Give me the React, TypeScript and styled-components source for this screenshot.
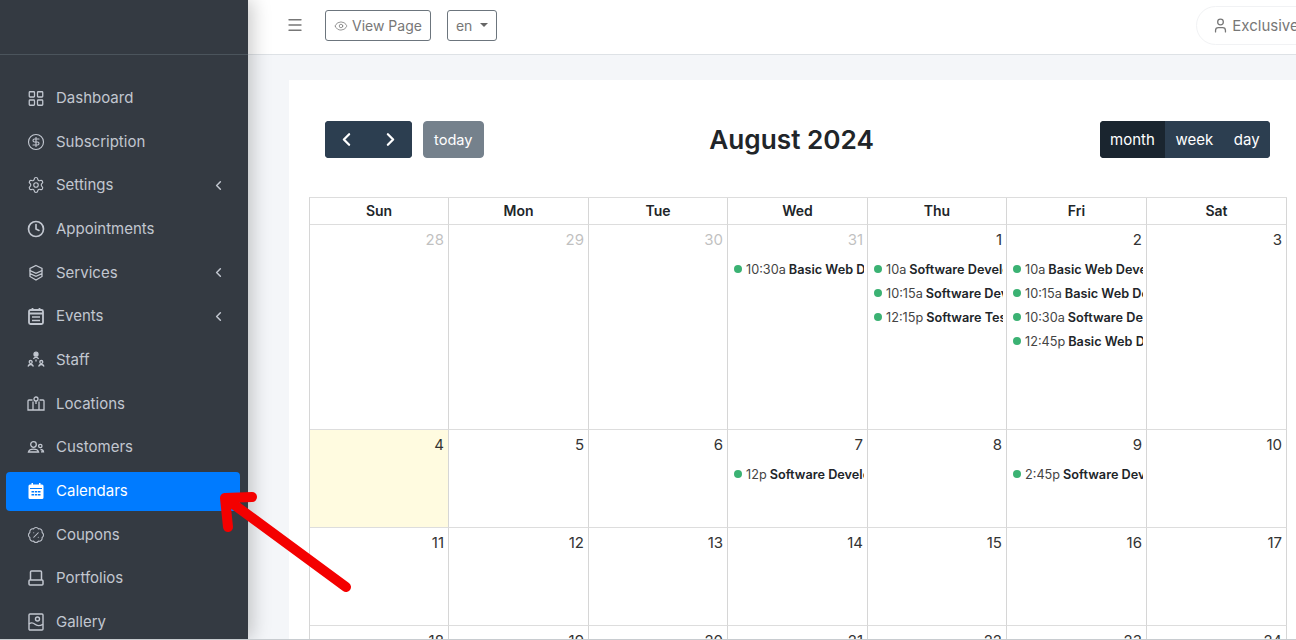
import styled, { createGlobalStyle } from "styled-components"
import {
  BadgePercent,
  ChevronLeft,
  ChevronRight,
  CircleDollarSign,
  Clock,
  Eye,
  LayoutGrid,
  Menu,
  Settings,
  User,
} from "lucide-react"
import type { ReactNode } from "react"

const GlobalStyle = createGlobalStyle`
  * { box-sizing: border-box; }
  html, body { margin: 0; padding: 0; height: 100%; overflow: hidden; }
  body { font-family: Inter, "Liberation Sans", sans-serif; background: #f4f6f9; }
`

const Glyph = ({ children, weight = 1.3 }: { children: ReactNode; weight?: number }) => (
  <svg width="18" height="18" viewBox="0 0 18 18" fill="none" stroke="currentColor" strokeWidth={weight}>
    {children}
  </svg>
)

const ServicesIcon = () => (
  <Glyph>
    <path d="M9 1.500l6 2.800v2.200l-6 2.800-6-2.800V4.300z" />
    <path d="M3 6.500v3l6 2.800 6-2.800v-3M3 9.500v3l6 3.500 6-3.500v-3" />
  </Glyph>
)

const StaffIcon = () => (
  <Glyph>
    <circle cx="9" cy="3.200" r="2" fill="currentColor" />
    <path d="M6.500 8c.4-1.200 1.300-1.600 2.500-1.600s2.100.4 2.500 1.600" />
    <circle cx="3.700" cy="11" r="1.500" />
    <circle cx="14.300" cy="11" r="1.500" />
    <path d="M1 15.500c.4-1.400 1.400-2 2.700-2s2.300.6 2.700 2M11.600 15.500c.4-1.400 1.400-2 2.700-2s2.300.6 2.700 2M9 8.500v2" />
  </Glyph>
)

const LocationsIcon = () => (
  <Glyph>
    <path d="M5.500 5H2a1 1 0 0 0-1 1v9h16V6a1 1 0 0 0-1-1h-3.500" />
    <path d="M6 6.500V15M12 6.500V15" />
    <circle cx="9" cy="4" r="2" />
    <path d="M9 6v3" />
  </Glyph>
)

const CustomersIcon = () => (
  <Glyph>
    <circle cx="6.500" cy="6.500" r="2.800" />
    <path d="M1.500 14c.6-2 2.500-2.800 5-2.800s4.400.8 5 2.800z" />
    <circle cx="13.300" cy="8" r="1.700" />
    <path d="M13.500 11.500c1.500 0 2.700.7 3 2.300h-2.500" />
  </Glyph>
)

const PortfoliosIcon = () => (
  <Glyph weight={1.5}>
    <path d="M3.500 11V3a1 1 0 0 1 1-1h9a1 1 0 0 1 1 1v8" />
    <rect x="2" y="11" width="14" height="5" rx="1" />
  </Glyph>
)

const GalleryIcon = () => (
  <Glyph weight={1.4}>
    <rect x="2" y="1" width="14" height="16" rx="1" />
    <circle cx="10.500" cy="6" r="2" />
    <path d="M2 11c2.500-2 4-1.500 6 .3s4 2 8 0" />
  </Glyph>
)

const CouponsIcon = () => <BadgePercent size={18} strokeWidth={1.4} />

const FilledCalendar = () => (
  <svg width="18" height="18" viewBox="0 0 18 18">
    <path
      fill="currentColor"
      d="M4.500 1h1.500v1.500h6V1h1.500v1.500H15a1.500 1.500 0 0 1 1.500 1.500v11.500A1.500 1.500 0 0 1 15 17H3a1.500 1.500 0 0 1-1.500-1.500V4A1.500 1.500 0 0 1 3 2.500h1.500z"
    />
    <path fill="#007bff" d="M3 6h12v1H3zM4.500 9h2.500v1.500H4.500zM7.800 9h2.500v1.500H7.800zM11 9h2.500v1.500H11zM4.500 12h2.500v1.500H4.500zM7.800 12h2.500v1.500H7.800zM11 12h2.500v1.500H11z" />
  </svg>
)

const EventsIcon = () => (
  <Glyph weight={1.8}>
    <rect x="2" y="3" width="14" height="14" rx="1.500" />
    <path d="M5.500 1v3M12.500 1v3M2 6.500h14" />
    <path strokeWidth="1.500" d="M5 10h8M5 13.500h8" />
  </Glyph>
)

type NavEntry = { label: string; icon: ReactNode; arrow?: boolean; active?: boolean }

const lucide = { size: 18, strokeWidth: 1.5 }

const navItems: NavEntry[] = [
  { label: "Dashboard", icon: <LayoutGrid size={19} strokeWidth={1.7} /> },
  { label: "Subscription", icon: <CircleDollarSign {...lucide} /> },
  { label: "Settings", icon: <Settings {...lucide} />, arrow: true },
  { label: "Appointments", icon: <Clock size={18} strokeWidth={2.2} /> },
  { label: "Services", icon: <ServicesIcon />, arrow: true },
  { label: "Events", icon: <EventsIcon />, arrow: true },
  { label: "Staff", icon: <StaffIcon /> },
  { label: "Locations", icon: <LocationsIcon /> },
  { label: "Customers", icon: <CustomersIcon /> },
  { label: "Calendars", icon: <FilledCalendar />, active: true },
  { label: "Coupons", icon: <CouponsIcon /> },
  { label: "Portfolios", icon: <PortfoliosIcon /> },
  { label: "Gallery", icon: <GalleryIcon /> },
]

const weekDays = ["Sun", "Mon", "Tue", "Wed", "Thu", "Fri", "Sat"]

type CalEvent = { time: string; title: string }
type CalDay = { num: number; muted?: boolean; today?: boolean; events?: CalEvent[] }

const weeks: { height: number; days: CalDay[] }[] = [
  {
    height: 205,
    days: [
      { num: 28, muted: true },
      { num: 29, muted: true },
      { num: 30, muted: true },
      { num: 31, muted: true, events: [{ time: "10:30a", title: "Basic Web Development" }] },
      {
        num: 1,
        events: [
          { time: "10a", title: "Software Development" },
          { time: "10:15a", title: "Software Development" },
          { time: "12:15p", title: "Software Testing" },
        ],
      },
      {
        num: 2,
        events: [
          { time: "10a", title: "Basic Web Development" },
          { time: "10:15a", title: "Basic Web Development" },
          { time: "10:30a", title: "Software Development" },
          { time: "12:45p", title: "Basic Web Development" },
        ],
      },
      { num: 3 },
    ],
  },
  {
    height: 98,
    days: [
      { num: 4, today: true },
      { num: 5 },
      { num: 6 },
      { num: 7, events: [{ time: "12p", title: "Software Development" }] },
      { num: 8 },
      { num: 9, events: [{ time: "2:45p", title: "Software Development" }] },
      { num: 10 },
    ],
  },
  { height: 98, days: [11, 12, 13, 14, 15, 16, 17].map((num) => ({ num })) },
  { height: 98, days: [18, 19, 20, 21, 22, 23, 24].map((num) => ({ num })) },
]

const App = () => {
  return (
    <>
      <GlobalStyle />
      <Page>
        <Sidebar>
          <Brand />
          <Nav>
            {navItems.map((item) => (
              <NavItem key={item.label} $active={item.active}>
                <NavIcon>{item.icon}</NavIcon>
                <NavLabel>{item.label}</NavLabel>
                {item.arrow && <ChevronLeft size={15} strokeWidth={2.4} />}
              </NavItem>
            ))}
          </Nav>
        </Sidebar>
        <Main>
          <Topbar>
            <Burger>
              <Menu size={18} strokeWidth={1.8} />
            </Burger>
            <OutlineButton>
              <Eye size={14} strokeWidth={1.3} />
              View Page
            </OutlineButton>
            <OutlineButton>
              en
              <Caret />
            </OutlineButton>
            <UserPill>
              <User size={17} strokeWidth={1.8} />
              Exclusive Member
            </UserPill>
          </Topbar>
          <Content>
            <Card>
              <Toolbar>
                <ToolGroup>
                  <ButtonGroup>
                    <CalButton $wide>
                      <ChevronLeft size={21} strokeWidth={2.6} />
                    </CalButton>
                    <CalButton $wide>
                      <ChevronRight size={21} strokeWidth={2.6} />
                    </CalButton>
                  </ButtonGroup>
                  <TodayButton>today</TodayButton>
                </ToolGroup>
                <Title>August 2024</Title>
                <ButtonGroup>
                  <CalButton $active>month</CalButton>
                  <CalButton>week</CalButton>
                  <CalButton>day</CalButton>
                </ButtonGroup>
              </Toolbar>
              <CalendarGrid>
                <WeekRow $height={27}>
                  {weekDays.map((day) => (
                    <HeadCell key={day}>{day}</HeadCell>
                  ))}
                </WeekRow>
                {weeks.map((week) => (
                  <WeekRow key={week.days[0].num} $height={week.height}>
                    {week.days.map((day) => (
                      <DayCell key={day.num} $today={day.today}>
                        <DayNumber $muted={day.muted}>{day.num}</DayNumber>
                        {day.events?.map((ev) => (
                          <EventRow key={ev.time}>
                            <Dot />
                            <EventTime>{ev.time}</EventTime>
                            <EventTitle>{ev.title}</EventTitle>
                          </EventRow>
                        ))}
                      </DayCell>
                    ))}
                  </WeekRow>
                ))}
              </CalendarGrid>
            </Card>
          </Content>
        </Main>
        <Arrow viewBox="0 0 140 105" width="140" height="105">
          <path
            d="M131 96 L10 7 M10 7 L37 6 M10 7 L13 36"
            fill="none"
            stroke="#f40000"
            strokeWidth="10"
            strokeLinecap="round"
            strokeLinejoin="round"
          />
        </Arrow>
      </Page>
    </>
  )
}

const Page = styled.div`
  position: relative;
  display: flex;
  width: 1296px;
  height: 640px;
  overflow: hidden;
  border-bottom: 1px solid #c8ccd0;
`

const Sidebar = styled.aside`
  flex: 0 0 248px;
  background: #343a42;
  box-shadow: 4px 0 18px rgba(0, 0, 0, 0.22);
  z-index: 2;
`

const Brand = styled.div`
  height: 55px;
  border-bottom: 1px solid #4b545c;
`

const Nav = styled.nav`
  display: flex;
  flex-direction: column;
  gap: 4.67px;
  padding: 23.6px 8px 0 6px;
`

const NavItem = styled.div<{ $active?: boolean }>`
  display: flex;
  align-items: center;
  height: 39px;
  padding: 0 14px 0 21px;
  border-radius: 4px;
  font-size: 15px;
  color: ${(props) => (props.$active ? "#fff" : "#c2c7d0")};
  background: ${(props) => (props.$active ? "#007bff" : "transparent")};
`

const NavIcon = styled.span`
  display: flex;
  width: 18px;
  margin-right: 11px;
`

const NavLabel = styled.span`
  flex: 1;
  margin-top: -1px;
`

const Main = styled.main`
  flex: 1;
  min-width: 0;
  display: flex;
  flex-direction: column;
`

const Topbar = styled.header`
  flex: 0 0 55px;
  display: flex;
  align-items: center;
  padding-left: 38px;
  background: #fff;
  border-bottom: 1px solid #dee2e6;
  white-space: nowrap;
  overflow: hidden;
`

const Burger = styled.span`
  display: flex;
  margin-right: 21px;
  margin-top: -5px;
  color: #777;
`

const OutlineButton = styled.button`
  display: flex;
  align-items: center;
  gap: 4px;
  height: 31px;
  margin-right: 16px;
  margin-top: -3px;
  padding: 0 8px;
  background: #fff;
  border: 1px solid #6c757d;
  border-radius: 3px;
  font: 14px Inter, sans-serif;
  color: #777;
`

const Caret = styled.i`
  margin-left: 4px;
  margin-top: -2px;
  border-top: 4px solid #666;
  border-left: 4px solid transparent;
  border-right: 4px solid transparent;
`

const UserPill = styled.div`
  flex-shrink: 0;
  display: flex;
  align-items: center;
  gap: 3px;
  height: 39px;
  margin-left: 683px;
  margin-top: -3px;
  padding: 0 15px;
  border: 1px solid #f1f2f4;
  border-radius: 20px;
  font-size: 15px;
  color: #777;
`

const Content = styled.div`
  flex: 1;
  padding: 25px 0 0 41px;
  background: #f4f6f9;
`

const Card = styled.section`
  width: 1040px;
  height: 100%;
  padding: 41px 20px 0;
  background: #fff;
`

const Toolbar = styled.div`
  display: flex;
  justify-content: space-between;
  align-items: center;
  width: 945px;
  margin: 0 0 39px 16px;
`

const ToolGroup = styled.div`
  display: flex;
  gap: 11px;
`

const ButtonGroup = styled.div`
  display: flex;
  border-radius: 4px;
  overflow: hidden;
`

const CalButton = styled.button<{ $active?: boolean; $wide?: boolean }>`
  display: flex;
  align-items: center;
  justify-content: center;
  height: 37px;
  padding: 0 ${(props) => (props.$wide ? "10.25px" : "9.33px")};
  border: 1px solid ${(props) => (props.$active ? "#1a252f" : "#2c3e50")};
  background: ${(props) => (props.$active ? "#1a252f" : "#2c3e50")};
  font: 15px Inter, sans-serif;
  color: #fff;
`

const TodayButton = styled.button`
  height: 37px;
  padding: 0 10px;
  border: 1px solid #2c3e50;
  border-radius: 4px;
  background: #2c3e50;
  opacity: 0.65;
  font: 14.6px Inter, sans-serif;
  color: #fff;
`

const Title = styled.h2`
  margin: 0;
  font-size: 26.2px;
  font-weight: 600;
  color: #212529;
`

const CalendarGrid = styled.div`
  width: 978px;
  border-top: 1px solid #ddd;
  border-left: 1px solid #d6d6d6;
`

const WeekRow = styled.div<{ $height: number }>`
  display: grid;
  grid-template-columns: 139px 140px 139px 140px 139px 140px 140px;
  height: ${(props) => props.$height}px;
`

const HeadCell = styled.div`
  display: flex;
  align-items: center;
  justify-content: center;
  padding-bottom: 2px;
  border-right: 1px solid #d6d6d6;
  border-bottom: 1px solid #ddd;
  font-size: 14px;
  font-weight: 600;
  color: #212529;
`

const DayCell = styled.div<{ $today?: boolean }>`
  min-width: 0;
  overflow: hidden;
  border-right: 1px solid #d6d6d6;
  border-bottom: 1px solid #ddd;
  background: ${(props) => (props.$today ? "#fffbe0" : "#fff")};
`

const DayNumber = styled.div<{ $muted?: boolean }>`
  padding: 5px 4px 0;
  height: 32px;
  text-align: right;
  font-size: 15px;
  color: #333;
  opacity: ${(props) => (props.$muted ? 0.3 : 1)};
`

const EventRow = styled.div`
  display: flex;
  align-items: center;
  height: 24px;
  margin: 0 3px 0 2px;
  padding-left: 4px;
  overflow: hidden;
  white-space: nowrap;
  font-size: 12.7px;
  color: #444;
`

const Dot = styled.i`
  flex-shrink: 0;
  width: 8px;
  height: 8px;
  margin-right: 4px;
  border-radius: 50%;
  background: #3bb273;
`

const EventTime = styled.span`
  flex-shrink: 0;
  margin-right: 3px;
`

const EventTitle = styled.b`
  font-weight: 600;
  color: #212529;
`

const Arrow = styled.svg`
  position: absolute;
  left: 215px;
  top: 491px;
  z-index: 3;
`

export default App
